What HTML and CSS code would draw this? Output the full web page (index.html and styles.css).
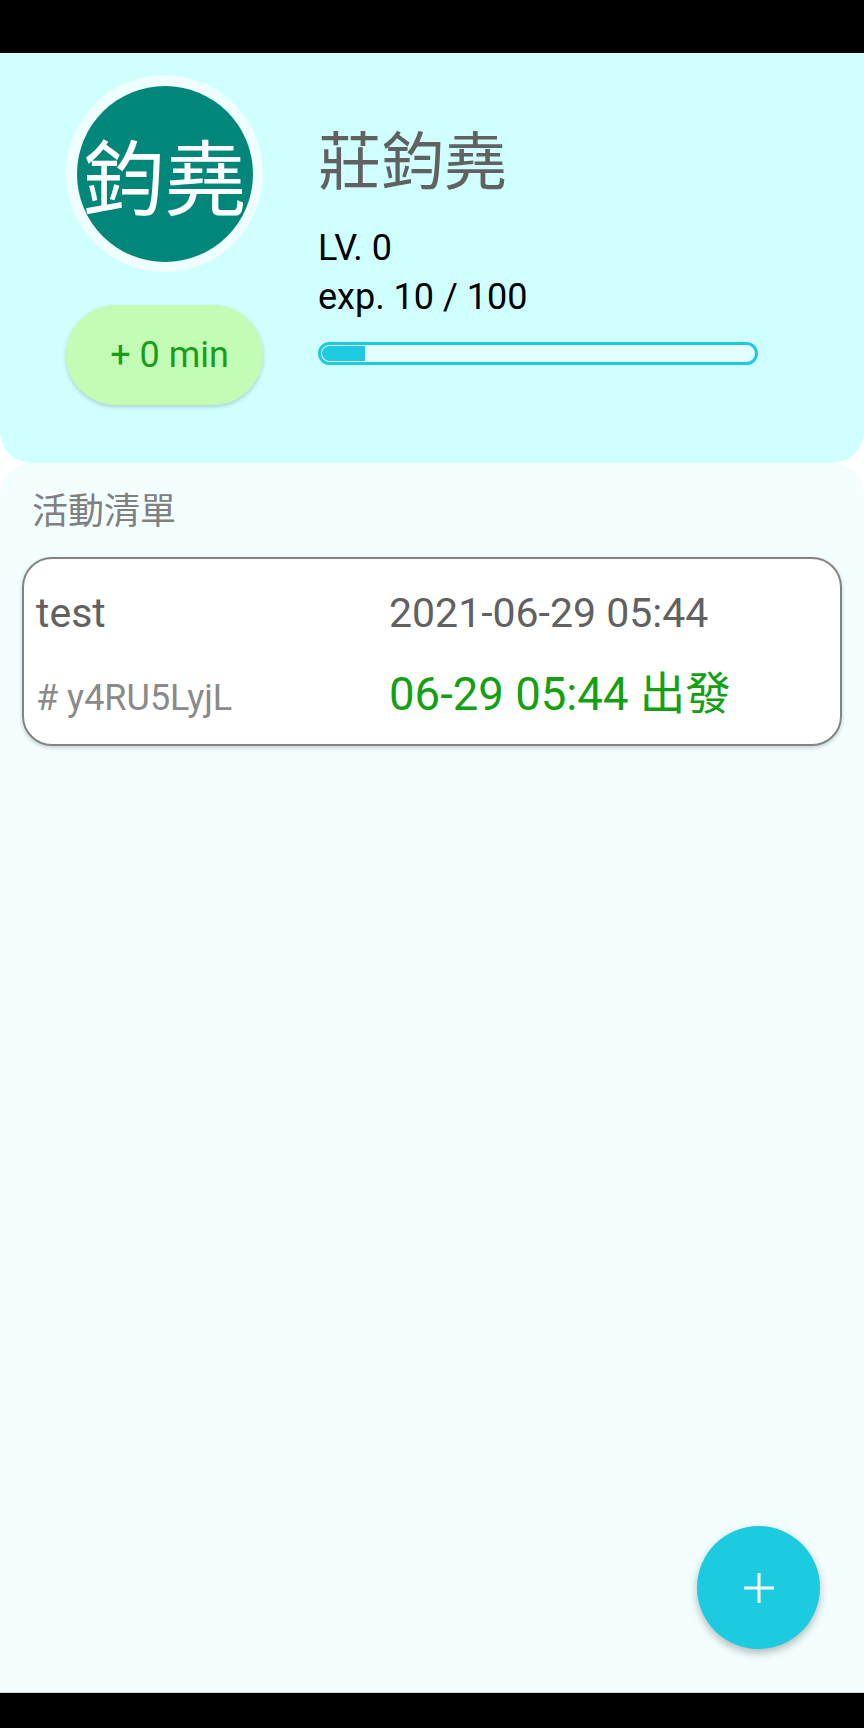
FILE: index.html
```html
<!DOCTYPE html>
<html lang="zh-Hant">
<head>
<meta charset="utf-8">
<title>活動清單</title>
<link rel="stylesheet" href="styles.css">
</head>
<body>
<div class="screen">
  <div class="statusbar"></div>
  <header class="header">
    <div class="left-col">
      <div class="avatar"><div class="avatar-inner">鈞堯</div></div>
      <div class="pill">+ 0 min</div>
    </div>
    <div class="right-col">
      <div class="name">莊鈞堯</div>
      <div class="stat lv">LV. 0</div>
      <div class="stat">exp. 10 / 100</div>
      <div class="progress"><div class="progress-fill" style="width:10%"></div></div>
    </div>
  </header>
  <main class="list">
    <div class="list-title">活動清單</div>
    <div class="card">
      <div class="row row1">
        <div class="cell-left title">test</div>
        <div class="cell-right date">2021-06-29 05:44</div>
      </div>
      <div class="row row2">
        <div class="cell-left code"># y4RU5LyjL</div>
        <div class="cell-right depart">06-29 05:44 出發</div>
      </div>
    </div>
  </main>
  <div class="navbar"></div>
  <button class="fab" aria-label="add">
    <svg width="30" height="30" viewBox="0 0 30 30"><path d="M15 0V30M0 15H30" stroke="#fff" stroke-width="3" fill="none"/></svg>
  </button>
</div>
</body>
</html>
```

FILE: styles.css
```css
html, body {
  margin: 0;
  padding: 0;
}
body {
  width: 864px;
  height: 1728px;
  background: #ffffff;
  font-family: Roboto, "Noto Sans CJK TC", sans-serif;
  overflow: hidden;
}
.screen {
  position: relative;
  width: 864px;
  height: 1728px;
  display: flex;
  flex-direction: column;
}
.statusbar {
  height: 53px;
  background: #000;
  flex: none;
}
.navbar {
  height: 36px;
  background: #000;
  border-top: 1px solid #cfd8d8;
  box-sizing: border-box;
  flex: none;
}
.header {
  flex: none;
  height: 410px;
  box-sizing: border-box;
  background: #d0ffff;
  border-radius: 0 0 32px 32px;
  padding: 22px 0 0 66px;
  display: flex;
}
.left-col {
  width: 197px;
  display: flex;
  flex-direction: column;
}
.avatar {
  width: 197px;
  height: 197px;
  border-radius: 50%;
  background: #effefe;
  display: flex;
  align-items: center;
  justify-content: center;
}
.avatar-inner {
  width: 176px;
  height: 176px;
  border-radius: 50%;
  background: #01877a;
  color: #fff;
  font-family: "Noto Sans CJK TC", sans-serif;
  font-size: 82px;
  line-height: 1;
  display: flex;
  align-items: center;
  justify-content: center;
  overflow: hidden;
  white-space: nowrap;
}
.pill {
  margin-top: 33px;
  width: 197px;
  height: 100px;
  border-radius: 50px;
  background: #c3fdb5;
  box-shadow: 0 2px 4px rgba(0,0,0,0.18);
  color: #1a9e1a;
  font-size: 36px;
  display: flex;
  align-items: center;
  justify-content: center;
  padding-left: 10px;
  box-sizing: border-box;
}
.right-col {
  margin-left: 55px;
  padding-top: 50px;
  width: 440px;
}
.name {
  font-family: "Noto Sans CJK TC", sans-serif;
  font-size: 63px;
  line-height: 63px;
  color: #616161;
}
.stat {
  font-size: 36px;
  line-height: 49px;
  color: #000;
}
.lv {
  margin-top: 36px;
}
.progress {
  margin-top: 20px;
  width: 440px;
  height: 23px;
  box-sizing: border-box;
  border: 3px solid #1ecbe1;
  border-radius: 12px;
  background: #e4ffff;
  padding: 1px;
}
.progress-fill {
  height: 100%;
  background: #1ecbe1;
  border-radius: 8px 0 0 8px;
}
.list {
  flex: 1;
  background: #f3ffff;
  border-radius: 32px 32px 0 0;
  padding: 28px 22px 0 22px;
}
.list-title {
  font-family: "Noto Sans CJK TC", sans-serif;
  font-size: 36px;
  line-height: 35px;
  color: #808080;
  padding-left: 10px;
}
.card {
  margin-top: 31px;
  height: 189px;
  box-sizing: border-box;
  background: #fff;
  border: 2px solid #848484;
  border-radius: 30px;
  box-shadow: 0 2px 4px rgba(0,0,0,0.18);
  padding: 26px 12px 0 12px;
}
.row {
  display: flex;
  align-items: baseline;
}
.row1 {
  height: 56px;
  line-height: 56px;
}
.row2 {
  margin-top: 22px;
  height: 68px;
  line-height: 64px;
}
.cell-left {
  width: 353px;
  flex: none;
}
.title {
  font-size: 41px;
  color: #616161;
}
.date {
  font-size: 41px;
  color: #616161;
}
.code {
  font-size: 36px;
  color: #8a8a8a;
}
.depart {
  font-size: 45.5px;
  color: #13a013;
}
.fab {
  position: absolute;
  right: 44px;
  bottom: 79px;
  width: 123px;
  height: 123px;
  border-radius: 50%;
  border: none;
  background: #1ccbdf;
  box-shadow: 0 4px 8px rgba(0,0,0,0.28);
  display: flex;
  align-items: center;
  justify-content: center;
  padding: 0;
}
.fab svg {
  display: block;
}
```
